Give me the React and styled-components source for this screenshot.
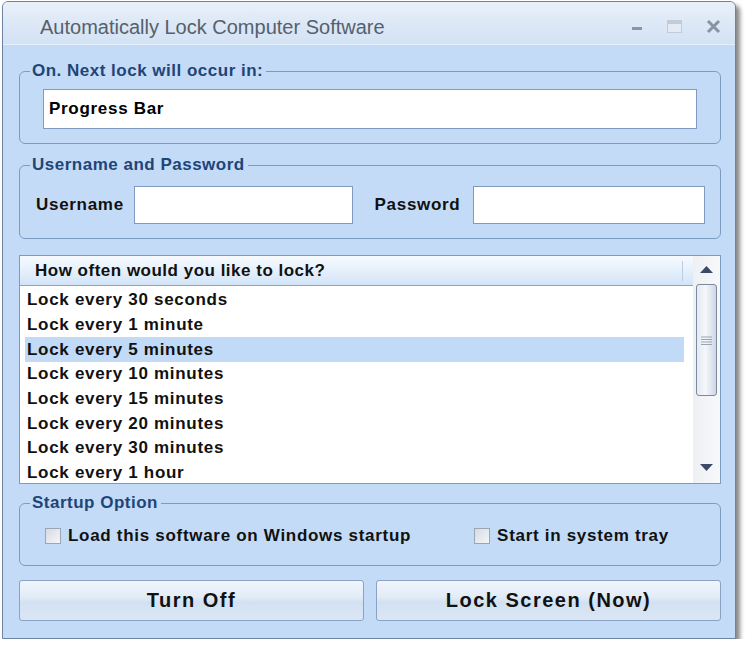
import styled, { createGlobalStyle } from "styled-components";

const GlobalStyle = createGlobalStyle`
  html, body {
    margin: 0;
    padding: 0;
    background: #ffffff;
  }
  body {
    font-family: "Liberation Sans", Arial, sans-serif;
  }
`;

const Window = styled.div`
  margin: 1px 0 0 2px;
  width: 734px;
  height: 638px;
  box-sizing: border-box;
  border: 1px solid #6d83a3;
  border-radius: 6px 6px 0 0;
  background: #c3dbf7;
  box-shadow: 4px 4px 4px rgba(40, 40, 40, 0.55);
  display: flex;
  flex-direction: column;
  overflow: hidden;
`;

const TitleBar = styled.div`
  height: 42px;
  flex: none;
  display: flex;
  align-items: center;
  padding: 0 14px 0 37px;
  background: linear-gradient(#e9f0f9, #dbe7f6 60%, #d3e2f4);
  border-bottom: 1px solid #e6eefa;
`;

const Title = styled.div`
  flex: 1;
  font-size: 20px;
  color: #56606c;
  padding-top: 9px;
`;

const Controls = styled.div`
  display: flex;
  align-items: center;
  gap: 24px;
  padding-top: 6px;
`;

const Body = styled.div`
  flex: 1;
  display: flex;
  flex-direction: column;
  padding: 17px 14px 0 16px;
`;

const Group = styled.fieldset`
  margin: 0 0 ${(p) => p.$after}px 0;
  padding: 0 10px ${(p) => p.$bottom}px 10px;
  min-width: 0;
  border: 1px solid #7c9bc3;
  border-radius: 6px;
`;

const Legend = styled.legend`
  padding: 0 3px 0 2px;
  font-size: 17px;
  line-height: 18px;
  letter-spacing: 0.5px;
  font-weight: bold;
  color: #1f4577;
`;

const ProgressBox = styled.div`
  margin: 9px 13px 0 13px;
  height: 38px;
  display: flex;
  align-items: center;
  padding-left: 5px;
  background: #ffffff;
  border: 1px solid #7f9cc0;
  font-size: 17px;
  letter-spacing: 0.7px;
  font-weight: bold;
  color: #000;
`;

const CredRow = styled.div`
  display: flex;
  align-items: center;
  padding: 12px 5px 0 6px;
`;

const Label = styled.span`
  font-size: 17px;
  letter-spacing: 0.7px;
  font-weight: bold;
  color: #111;
  width: ${(p) => p.$w}px;
`;

const TextInput = styled.div`
  height: 36px;
  width: ${(p) => p.$w}px;
  background: #ffffff;
  border: 1px solid #7f9cc0;
  margin-right: ${(p) => p.$mr || 0}px;
`;

const ListBox = styled.div`
  height: 229px;
  box-sizing: border-box;
  border: 1px solid #7c9bc3;
  background: #ffffff;
  display: flex;
  margin-bottom: 10px;
`;

const ListMain = styled.div`
  flex: 1;
  display: flex;
  flex-direction: column;
  overflow: hidden;
`;

const ListHeader = styled.div`
  height: 30px;
  flex: none;
  box-sizing: border-box;
  display: flex;
  align-items: center;
  padding-left: 15px;
  background: linear-gradient(#f6faff, #e6f0fb 50%, #d2e4f8);
  border-bottom: 1px solid #8aa5c8;
  font-size: 17px;
  letter-spacing: 0.5px;
  font-weight: bold;
  color: #111;
  position: relative;

  &::after {
    content: "";
    position: absolute;
    right: 10px;
    top: 5px;
    bottom: 4px;
    width: 1px;
    background: #b9cde4;
  }
`;

const Row = styled.div`
  height: 24.7px;
  flex: none;
  display: flex;
  align-items: center;
  margin: 0 9px 0 5px;
  padding-left: 2px;
  font-size: 17px;
  letter-spacing: 0.7px;
  font-weight: bold;
  color: #111;
  background: ${(p) => (p.$selected ? "#c0daf7" : "transparent")};
`;

const ListRows = styled.div`
  padding-top: 2px;
  display: flex;
  flex-direction: column;
`;

const ScrollBar = styled.div`
  width: 27px;
  flex: none;
  background: linear-gradient(90deg, #eef0f3, #f7f8fa);
  display: flex;
  flex-direction: column;
  align-items: center;
`;

const Arrow = styled.div`
  height: ${(p) => p.$h}px;
  display: flex;
  align-items: center;
  justify-content: center;
`;

const Thumb = styled.div`
  width: 21px;
  height: 112px;
  box-sizing: border-box;
  border: 1px solid #7d8aa0;
  border-radius: 3px;
  background: linear-gradient(90deg, #e5ebf3, #f4f7fb 45%, #cdd7e4);
  display: flex;
  align-items: center;
  justify-content: center;
  margin-bottom: auto;
`;

const CheckRow = styled.div`
  display: flex;
  align-items: center;
  padding: 14px 0 0 15px;
`;

const CheckItem = styled.label`
  display: flex;
  align-items: center;
  gap: 7px;
  font-size: 17px;
  letter-spacing: 0.7px;
  font-weight: bold;
  color: #111;
  margin-right: ${(p) => p.$mr || 0}px;
`;

const Box = styled.span`
  width: 14px;
  height: 14px;
  border: 1px solid #9aa6b4;
  background: linear-gradient(135deg, #d6dbe2, #f4f6f8);
`;

const ButtonRow = styled.div`
  display: flex;
  gap: 12px;
`;

const Button = styled.div`
  flex: 1;
  height: 41px;
  box-sizing: border-box;
  display: flex;
  align-items: center;
  justify-content: center;
  border: 1px solid #8aa3c4;
  border-radius: 3px;
  background: linear-gradient(#f0f5fb, #e3ecf7 40%, #d2e1f2 55%, #dbe6f4);
  font-size: 20px;
  font-weight: bold;
  letter-spacing: 1.5px;
  color: #111;
`;

const rows = [
  "Lock every 30 seconds",
  "Lock every 1 minute",
  "Lock every 5 minutes",
  "Lock every 10 minutes",
  "Lock every 15 minutes",
  "Lock every 20 minutes",
  "Lock every 30 minutes",
  "Lock every 1 hour",
];

export default function App() {
  return (
    <>
      <GlobalStyle />
      <Window>
        <TitleBar>
          <Title>Automatically Lock Computer Software</Title>
          <Controls>
            <svg width="12" height="12" viewBox="0 0 12 12">
              <rect x="1" y="7" width="10" height="3" fill="#8a96a6" />
            </svg>
            <svg width="15" height="13" viewBox="0 0 15 13">
              <rect x="0.5" y="0.5" width="14" height="12" fill="#e4ebf4" stroke="#c2ccd8" />
              <rect x="1" y="1" width="13" height="3" fill="#c2ccd8" />
            </svg>
            <svg width="15" height="15" viewBox="0 0 15 15">
              <path d="M2 2 L13 13 M13 2 L2 13" stroke="#8994a3" strokeWidth="3" />
            </svg>
          </Controls>
        </TitleBar>
        <Body>
          <Group $after={12} $bottom={14}>
            <Legend>On. Next lock will occur in:</Legend>
            <ProgressBox>Progress Bar</ProgressBox>
          </Group>

          <Group $after={16} $bottom={14}>
            <Legend>Username and Password</Legend>
            <CredRow>
              <Label $w={99}>Username</Label>
              <TextInput $w={218} $mr={22} />
              <Label $w={99}>Password</Label>
              <TextInput $w={232} />
            </CredRow>
          </Group>

          <ListBox>
            <ListMain>
              <ListHeader>How often would you like to lock?</ListHeader>
              <ListRows>
                {rows.map((r, i) => (
                  <Row key={r} $selected={i === 2}>
                    {r}
                  </Row>
                ))}
              </ListRows>
            </ListMain>
            <ScrollBar>
              <Arrow $h={28}>
                <svg width="13" height="8" viewBox="0 0 13 8">
                  <path d="M6.5 0 L13 7 L0 7 Z" fill="#3c4a66" />
                </svg>
              </Arrow>
              <Thumb>
                <svg width="11" height="9" viewBox="0 0 11 9">
                  <path d="M0 1 H11 M0 3.5 H11 M0 6 H11 M0 8.5 H11" stroke="#9aa4b2" strokeWidth="1" />
                </svg>
              </Thumb>
              <Arrow $h={30}>
                <svg width="13" height="8" viewBox="0 0 13 8">
                  <path d="M0 0 L13 0 L6.5 7 Z" fill="#3c4a66" />
                </svg>
              </Arrow>
            </ScrollBar>
          </ListBox>

          <Group $after={14} $bottom={19}>
            <Legend>Startup Option</Legend>
            <CheckRow>
              <CheckItem $mr={63}>
                <Box />
                Load this software on Windows startup
              </CheckItem>
              <CheckItem>
                <Box />
                Start in system tray
              </CheckItem>
            </CheckRow>
          </Group>

          <ButtonRow>
            <Button>Turn Off</Button>
            <Button>Lock Screen (Now)</Button>
          </ButtonRow>
        </Body>
      </Window>
    </>
  );
}
